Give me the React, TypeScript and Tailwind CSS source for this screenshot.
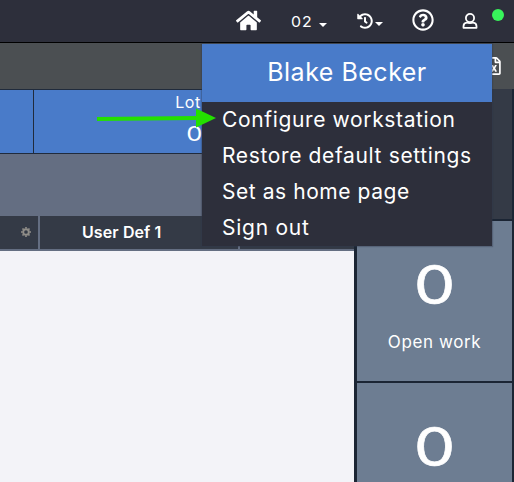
import React from "react";
import { FaHome, FaHistory, FaRegQuestionCircle, FaRegFileExcel } from "react-icons/fa";

const menuItems = [
  { label: "Configure workstation", tracking: "tracking-[0.64px]" },
  { label: "Restore default settings", tracking: "tracking-[0.64px]" },
  { label: "Set as home page", tracking: "tracking-[0.56px]" },
  { label: "Sign out", tracking: "tracking-[0.75px]" },
];

function Caret() {
  return <span className="h-0 w-0 border-x-4 border-t-4 border-x-transparent border-t-white" />;
}

function UserIcon() {
  return (
    <svg width="16" height="18" viewBox="0 0 16 18" fill="none" stroke="white" strokeWidth="1.8">
      <circle cx="8" cy="6" r="4.1" />
      <path d="M4.9 10.6C2.8 10.8 1.5 12.2 1.5 14.2v1.6h13v-1.6c0-2-1.3-3.4-3.4-3.6C10 11.3 6 11.3 4.9 10.6Z" strokeLinejoin="round" />
    </svg>
  );
}

function GearIcon() {
  return (
    <svg width="10" height="10" viewBox="0 0 10 10" fill="none" stroke="currentColor">
      <circle cx="5" cy="5" r="2.8" strokeWidth="1.9" />
      <path d="M5 0v1.6M5 8.4V10M0 5h1.6M8.4 5H10M1.5 1.5l1.1 1.1M7.4 7.4l1.1 1.1M8.5 1.5L7.4 2.6M2.6 7.4L1.5 8.5" strokeWidth="1.6" />
    </svg>
  );
}

function TopBar() {
  return (
    <header className="flex h-[43px] shrink-0 items-start border-b border-black bg-[#2d2f3b] text-white">
      <FaHome size={25} className="ml-[236px] mt-[8px]" />
      <div className="ml-[30px] mt-[12px] flex w-[36px] items-center justify-between">
        <span className="origin-left scale-x-[1.06] text-[15px] leading-5 tracking-[0.8px]">02</span>
        <span className="mt-[5px] flex"><Caret /></span>
      </div>
      <div className="ml-[30px] mt-[13px] flex items-center">
        <FaHistory size={16} />
        <span className="mt-[6px] ml-[2px] flex"><Caret /></span>
      </div>
      <FaRegQuestionCircle size={22} className="ml-[29px] mt-[9px]" />
      <div className="ml-[28px] mt-[12px]"><UserIcon /></div>
      <span className="ml-[14px] mt-[9px] h-[12px] w-[12px] rounded-full bg-[#38f45b]" />
    </header>
  );
}

function Tile({ label, className }: { label: string; className: string }) {
  return (
    <div className={"flex shrink-0 flex-col items-center bg-[#6d7d92] text-white " + className}>
      <span className="mt-[35px] h-[56px] scale-x-[1.2] font-[Lato] text-[54px] leading-[56px] [-webkit-text-stroke:0.6px_white]">0</span>
      <span className="mt-[20px] text-[17px] leading-5 tracking-[0.6px]">{label}</span>
    </div>
  );
}

function UserMenu() {
  return (
    <div className="absolute left-[202px] top-[44px] flex h-[202px] w-[290px] flex-col bg-[#2d2f3b] text-white shadow-[0_0_1px_1px_rgba(45,55,75,0.35)]">
      <div className="flex h-[58px] items-center justify-center bg-[#497bc9] text-[25px] tracking-[0.5px]">
        Blake Becker
      </div>
      <ul className="text-[21px] leading-9">
        {menuItems.map((item) => (
          <li key={item.label} className={"h-9 whitespace-nowrap pl-[20px] " + item.tracking}>{item.label}</li>
        ))}
      </ul>
    </div>
  );
}

export default function App() {
  return (
    <div className="relative flex h-[482px] w-[514px] flex-col overflow-hidden bg-[#1b2534] font-[Inter,sans-serif]">
      <TopBar />
      <div className="flex h-[46px] shrink-0 items-center justify-end bg-[#4b4f52] pr-[11px] text-white">
        <FaRegFileExcel size={18} />
      </div>
      <div className="flex min-h-0 flex-1">
        <div className="flex w-[354px] shrink-0 flex-col">
          <div className="flex h-[65px] shrink-0 border-y border-[#202b3c] bg-[#497bc9] text-white">
            <div className="w-[34px] border-r border-[#202b3c]" />
            <div className="flex flex-1 flex-col items-center">
              <span className="mt-[2px] text-base leading-5 tracking-[0.5px]">Lot 1</span>
              <span className="mt-[9px] scale-x-[1.15] font-[Lato] text-[22px] leading-6">0</span>
            </div>
          </div>
          <div className="h-[62px] shrink-0 bg-[#646e82]" />
          <div className="flex h-[35px] shrink-0 border-b-2 border-[#646e82] bg-[#343a46]">
            <div className="flex w-[40px] items-center justify-end border-r-2 border-[#646e82] pr-[7px] pb-[2px] text-[#918e89]">
              <GearIcon />
            </div>
            <div className="w-[200px] border-r-2 border-[#646e82] pl-[42px] text-base font-semibold leading-[33px] tracking-[0.1px] text-white">User Def 1</div>
          </div>
          <div className="flex-1 bg-[#f3f3f8]" />
        </div>
        <div className="ml-[3px] flex w-[155px] flex-col">
          <div className="h-[130px] shrink-0 bg-[#343a46]" />
          <Tile label="Open work" className="mt-[2px] h-[160px]" />
          <Tile label="" className="mt-[2px] h-[160px]" />
        </div>
      </div>
      <UserMenu />
      <svg className="absolute left-[96px] top-[107px]" width="121" height="22" viewBox="0 0 121 22">
        <path d="M1 12L101 11" stroke="#24e000" strokeWidth="4" />
        <path d="M100 1.5L120 11L100 20.5Z" fill="#24e000" />
      </svg>
    </div>
  );
}
